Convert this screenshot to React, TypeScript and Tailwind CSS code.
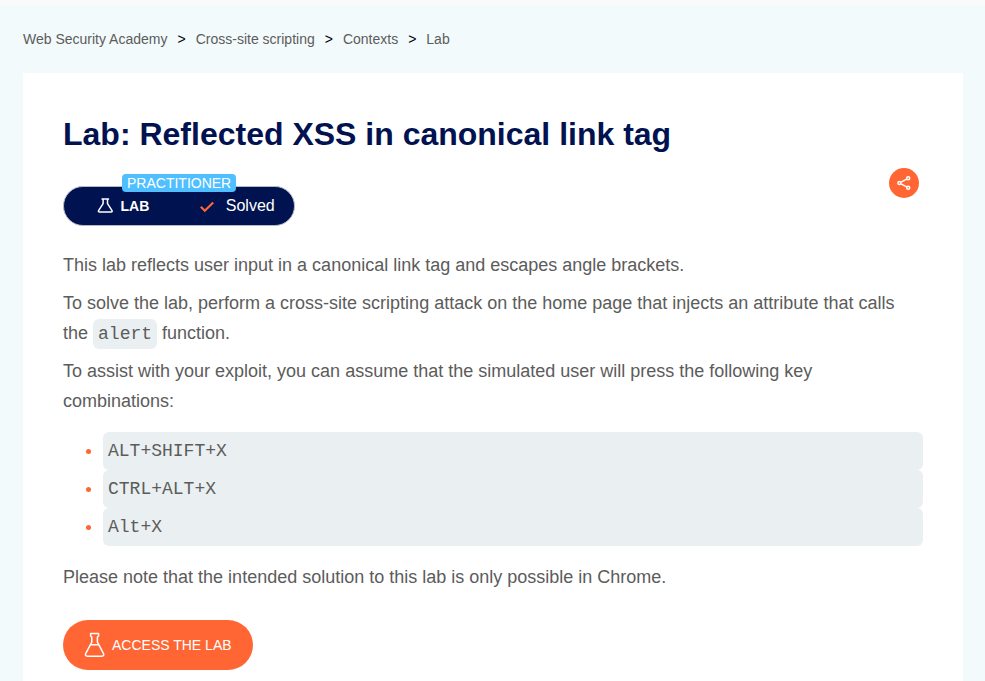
const combinations = ['ALT+SHIFT+X', 'CTRL+ALT+X', 'Alt+X'];
const crumbs = ['Web Security Academy', 'Cross-site scripting', 'Contexts', 'Lab'];

function SmallFlask() {
  return (
    <svg className="h-[16px] w-[16px] shrink-0" viewBox="0 0 16 16" fill="none" stroke="white" strokeWidth="1.5" strokeLinejoin="round">
      <path d="M4.500 .9h7.600M6.100 1.100v4.600L1.700 12.400c-.6 1.100-.1 1.700.9 1.700h11.400c1 0 1.500-.6.9-1.700L10.500 5.700V1.100" />
    </svg>
  );
}

function LargeFlask() {
  return (
    <svg className="h-[26px] w-[21px] shrink-0" viewBox="0 0 21 26" fill="none" stroke="white" strokeWidth="1.5" strokeLinejoin="round">
      <path d="M6.600 1.500h8v2.200l-1.200 1.500v4.900l6 11.200c.9 1.800.1 2.900-1.500 2.900H3.300c-1.600 0-2.400-1.100-1.500-2.900l6-11.200V5.200L6.600 3.700zM7.100 12.700h7" />
    </svg>
  );
}

export default function App() {
  return (
    <div className="h-[681px] overflow-hidden bg-[#f2fafc] font-['Liberation_Sans',Arial,sans-serif] text-[#5c5c5b]">
      <div className="h-[5px] bg-[#fafafa]" />
      <nav className="flex h-[68px] items-center gap-[10px] px-[23px] text-[14px] leading-5">
        {crumbs.map((crumb, i) => (
          <span key={crumb} className="flex gap-[10px]">
            {i > 0 && <span className="text-black">&gt;</span>}
            <a>{crumb}</a>
          </span>
        ))}
      </nav>
      <main className="mr-[22px] ml-[23px] h-[620px] bg-white px-10 pt-[41px] text-[18px] leading-[30px]">
        <h1 className="h-[40px] text-[32px] leading-[40px] font-bold whitespace-nowrap text-[#00124f]">
          Lab: Reflected XSS in canonical link tag
        </h1>
        <div className="flex h-[96px] items-start justify-between pt-[14px] pr-1">
          <div className="relative mt-[18px] flex h-[40px] w-[232px] items-center rounded-full border border-[#b5bac7] bg-[#00124f] pl-[33px] text-white">
            <SmallFlask />
            <span className="ml-[7.500px] text-[14px] leading-5 font-bold">LAB</span>
            <svg className="mt-[1px] ml-[51px] h-[12px] w-[14px] shrink-0" viewBox="0 0 14 12" fill="none" stroke="#ff6633" strokeWidth="2.200">
              <path d="M.8 5.800 4.800 9.700 13.200 1.500" />
            </svg>
            <span className="ml-[11.500px] text-[16px] leading-5">Solved</span>
            <span className="absolute top-[-13px] left-[58px] h-[18px] rounded-[4px] bg-[#4fbfff] px-[5px] text-[14px] leading-[18px]">PRACTITIONER</span>
          </div>
          <button className="flex size-[30px] items-center justify-center rounded-full bg-[#ff6633]">
            <svg className="size-[14px]" viewBox="0 0 14 14" fill="none" stroke="white" strokeWidth="1.500">
              <path d="M4 6.200 9.700 3.200M4 7.800 9.700 10.800" />
              <circle cx="2.400" cy="7" r="1.500" />
              <circle cx="11.200" cy="2.300" r="1.500" />
              <circle cx="11.200" cy="11.700" r="1.500" />
            </svg>
          </button>
        </div>
        <p>This lab reflects user input in a canonical link tag and escapes angle brackets.</p>
        <div className="mt-2">
          <p>To solve the lab, perform a cross-site scripting attack on the home page that injects an attribute that calls</p>
          <p className="flex h-[30px] gap-[5px]">
            <span>the</span>
            <code className="mt-[1px] h-[30px] rounded-[6px] bg-[#eaeff2] px-[5px] font-['Liberation_Mono',monospace] text-[18px] leading-[30px]">alert</code>
            <span>function.</span>
          </p>
        </div>
        <p className="mt-2">To assist with your exploit, you can assume that the simulated user will press the following key combinations:</p>
        <ul className="my-4">
          {combinations.map((combination) => (
            <li key={combination} className="flex h-[38px] items-center">
              <span className="mr-3 ml-[23px] size-[5px] shrink-0 rounded-full bg-[#ff6633]" />
              <code className="h-[38px] grow rounded-[6px] bg-[#eaeff2] px-[5px] font-['Liberation_Mono',monospace] text-[18px] leading-[38px]">{combination}</code>
            </li>
          ))}
        </ul>
        <p>Please note that the intended solution to this lab is only possible in Chrome.</p>
        <button className="mt-7 flex h-[50px] w-[190px] items-center rounded-full bg-[#ff6633] pl-[21px] text-[14px] text-white">
          <LargeFlask />
          <span className="ml-[7px] whitespace-nowrap">ACCESS THE LAB</span>
        </button>
      </main>
    </div>
  );
}
